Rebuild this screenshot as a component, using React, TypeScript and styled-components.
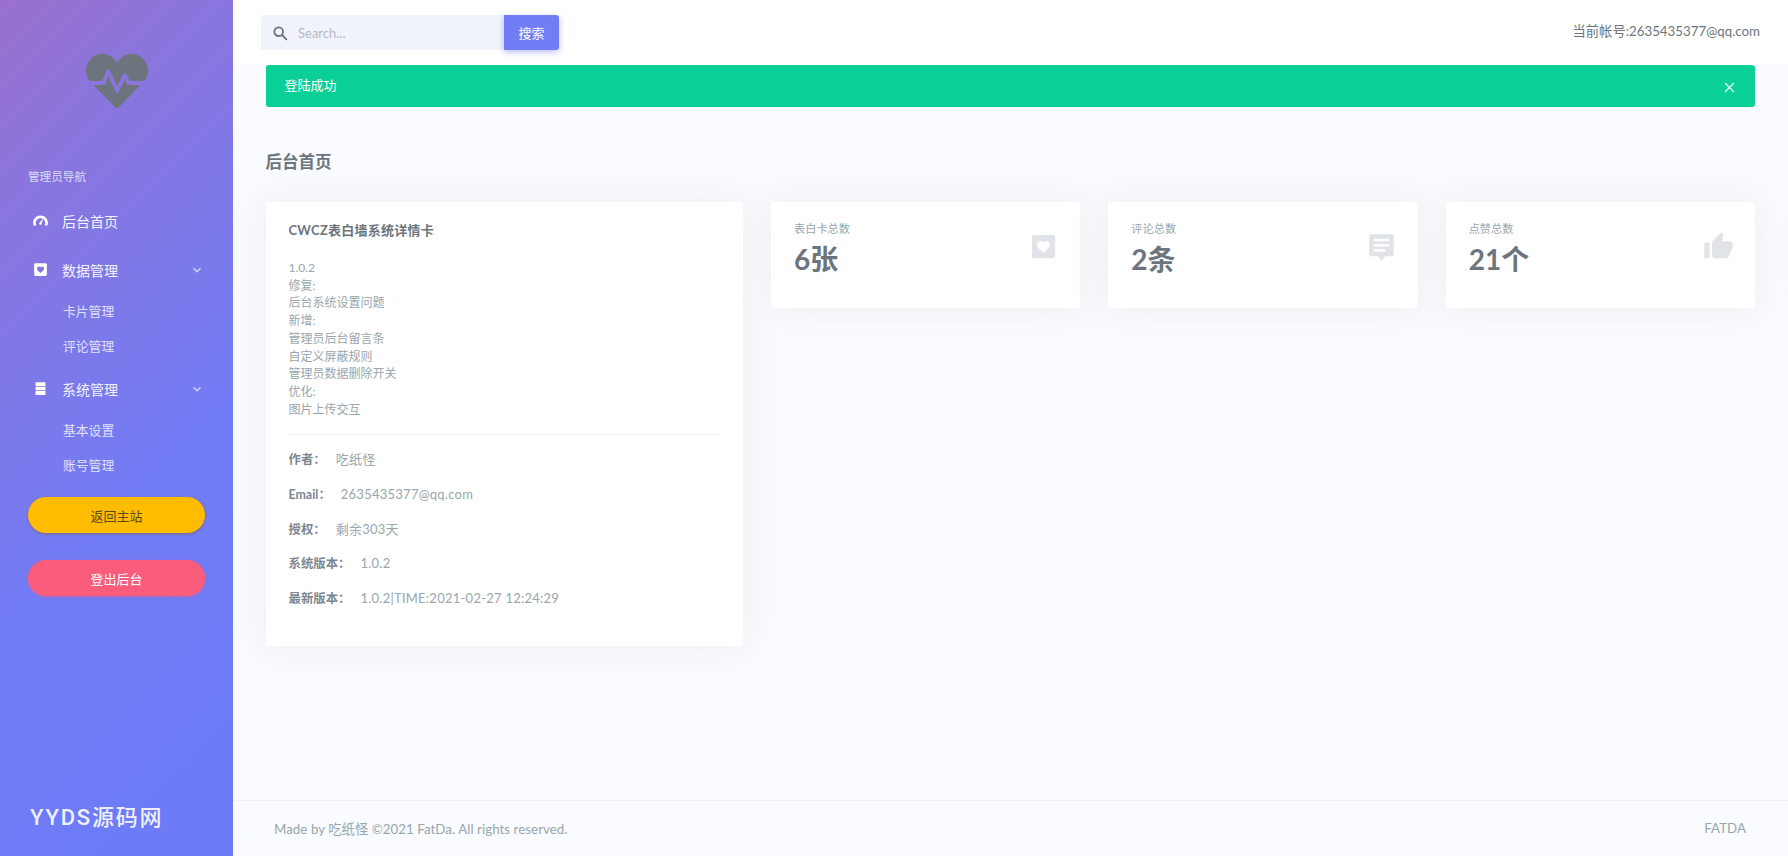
import styled, { createGlobalStyle } from "styled-components";
import { FaHeartbeat } from "react-icons/fa";
import { MdThumbUp, MdKeyboardArrowDown, MdClose } from "react-icons/md";

const GlobalStyle = createGlobalStyle`
    html, body {
        margin: 0;
        padding: 0;
        height: 100%;
    }
    body {
        font-family: Lato, "Noto Sans CJK SC", sans-serif;
        color: #6c757d;
        background: #fafbfe;
    }
`;

//layout
const Page = styled.div`
    display: flex;
    width: 100%;
    height: 856px;
    overflow: hidden;
`;

const Sidebar = styled.aside`
    width: 233px;
    flex-shrink: 0;
    display: flex;
    flex-direction: column;
    background: linear-gradient(135deg, #9a70cc 0%, #8a75dc 18%, #727cf5 58%, #6c7bf7 100%);
`;

const LogoBox = styled.div`
    height: 164px;
    padding-top: 50px;
    box-sizing: border-box;
    display: flex;
    justify-content: center;
    color: #6c757d;
    font-size: 62px;
    line-height: 1;
`;

const NavTitle = styled.div`
    height: 32px;
    line-height: 26px;
    padding-left: 28px;
    font-size: 11.6px;
    color: #dcdcf8;
`;

const NavItem = styled.div`
    height: 49px;
    display: flex;
    align-items: center;
    padding: 0 28px 0 32px;
    font-size: 14px;
    color: #f3f3fd;

    svg.lead {
        width: 17px;
        height: 17px;
        margin-right: 13px;
        fill: #fff;
    }
    svg.arrow {
        margin-left: auto;
        width: 16px;
        height: 16px;
        color: #d5d8fa;
    }
`;

const SubItem = styled.div`
    height: 35px;
    line-height: 35px;
    padding-left: 63px;
    font-size: 12.8px;
    color: #dfe1fb;
`;

const PillButton = styled.div<{ $bg: string; $color: string; $shadow: string }>`
    width: 177px;
    height: 36px;
    margin: ${(p) => (p.$bg === "#ffbc00" ? "14px" : "27px")} 0 0 28px;
    border-radius: 19px;
    display: flex;
    align-items: center;
    justify-content: center;
    font-size: 13px;
    background: ${(p) => p.$bg};
    color: ${(p) => p.$color};
    box-shadow: 0 1px 3px ${(p) => p.$shadow};
`;

const Brand = styled.div`
    margin-top: auto;
    padding: 0 0 25px 30px;
    font-family: Roboto, "Noto Sans CJK SC", sans-serif;
    font-size: 22px;
    line-height: 26px;
    letter-spacing: 1.8px;
    font-weight: 500;
    color: #eef0fe;
`;

const Main = styled.main`
    flex: 1;
    min-width: 0;
    display: flex;
    flex-direction: column;
`;

const Header = styled.header`
    height: 65px;
    flex-shrink: 0;
    box-sizing: border-box;
    padding: 15px 28px 0 28px;
    display: flex;
    justify-content: space-between;
    background: #fff;
`;

const SearchGroup = styled.div`
    display: flex;
    height: 35px;
`;

const SearchInput = styled.div`
    width: 243px;
    display: flex;
    align-items: center;
    padding-left: 11px;
    box-sizing: border-box;
    border-radius: 3px 0 0 3px;
    background: #f1f3fa;
    font-size: 13px;
    color: #b4b9c4;

    svg {
        width: 16px;
        height: 16px;
        margin-right: 10px;
        flex-shrink: 0;
    }
`;

const SearchButton = styled.div`
    width: 55px;
    display: flex;
    align-items: center;
    justify-content: center;
    border-radius: 0 3px 3px 0;
    background: #727cf5;
    color: #fff;
    font-size: 13px;
    box-shadow: 0 2px 6px 0 rgba(114, 124, 245, 0.5);
`;

const Account = styled.div`
    font-size: 13.3px;
    line-height: 17px;
    margin-top: 8px;
    color: #6c757d;
`;

const Content = styled.div`
    flex: 1;
    padding: 0 33px 0 32.5px;
`;

const Alert = styled.div`
    height: 42px;
    display: flex;
    align-items: center;
    justify-content: space-between;
    padding: 0 17px 3px 19px;
    box-sizing: border-box;
    border-radius: 3px;
    background: #0acf97;
    color: #fff;
    font-size: 13px;

    svg {
        width: 17px;
        height: 17px;
        color: #d5f7ec;
        margin: 5px 0 0;
    }
`;

const PageTitle = styled.h4`
    margin: 42px 0 27px;
    height: 26px;
    line-height: 26px;
    font-size: 16.5px;
    font-weight: 700;
    color: #6c757d;
`;

const CardGrid = styled.div`
    display: grid;
    grid-template-columns: 477.5px 1fr;
    gap: 28px;
    align-items: start;
`;

const StatRow = styled.div`
    display: grid;
    grid-template-columns: repeat(3, 1fr);
    gap: 28px;
`;

const DetailCard = styled.section`
    height: 444px;
    box-sizing: border-box;
    padding: 19px 23px;
    border-radius: 3px;
    background: #fff;
    box-shadow: 0 0 35px 0 rgba(154, 161, 171, 0.15);
`;

const DetailTitle = styled.div`
    font-size: 13px;
    font-weight: 700;
    line-height: 18px;
    letter-spacing: 0.25px;
    color: #6c757d;
`;

const Notes = styled.div`
    margin-top: 20px;
    font-size: 12px;
    line-height: 17.7px;
    color: #98a6ad;
`;

const Divider = styled.hr`
    margin: 16px 0 0;
    border: none;
    border-top: 1px solid #eef2f7;
`;

const InfoList = styled.div`
    margin-top: 7px;
`;

const InfoRow = styled.div`
    height: 34.6px;
    line-height: 34.6px;
    font-size: 13px;
    letter-spacing: 0.25px;
    color: #98a6ad;

    strong {
        color: #7d8790;
        font-size: 12.4px;
        letter-spacing: 0;
        font-weight: 700;
        margin-right: 10px;
    }
`;

const StatCard = styled.section`
    height: 106px;
    box-sizing: border-box;
    padding: 19px 23px;
    display: flex;
    justify-content: space-between;
    border-radius: 3px;
    background: #fff;
    box-shadow: 0 0 35px 0 rgba(154, 161, 171, 0.15);
`;

const StatLabel = styled.div`
    font-size: 11.2px;
    line-height: 16px;
    color: #98a6ad;
`;

const StatValue = styled.div`
    margin-top: 4px;
    font-size: 28px;
    line-height: 36px;
    font-weight: 700;
    color: #6c757d;
`;

const StatIcon = styled.div`
    width: 31px;
    height: 31px;
    margin: 10px -2px 0 0;
    color: #e0e4e8;

    svg {
        display: block;
        width: 31px;
        height: 31px;
        fill: currentColor;
    }
`;

const Footer = styled.footer`
    height: 56px;
    flex-shrink: 0;
    margin-top: auto;
    box-sizing: border-box;
    padding: 0 42px 1px 41px;
    display: flex;
    align-items: center;
    justify-content: space-between;
    border-top: 1px solid #f0f1f6;
    font-size: 13.3px;
    letter-spacing: 0.05px;
    color: #98a6ad;
`;

//icons
const GaugeIcon = () => (
    <svg className="lead" viewBox="0 0 24 24">
        <path d="M12 5C6 5 1.5 9.6 1.5 15.5c0 1.3.3 2.5.7 3.5h4.1c-.6-1-1-2.200-1-3.500C5.300 11.800 8.300 8.800 12 8.800s6.700 3 6.700 6.700c0 1.300-.4 2.500-1 3.500h4.100c.4-1 .7-2.200.7-3.500C22.500 9.600 18 5 12 5z" />
        <path d="M15.800 8.800l-4.900 6.100a1.700 1.700 0 1 0 2.500 2.100z" />
    </svg>
);

const HeartBoxPath =
    "M5,3H19A2,2 0 0,1 21,5V19A2,2 0 0,1 19,21H5A2,2 0 0,1 3,19V5A2,2 0 0,1 5,3M12,17L12.72,16.34C15.3,14 17,12.46 17,10.57C17,9.03 15.79,7.82 14.25,7.82C13.38,7.82 12.55,8.23 12,8.87C11.45,8.23 10.62,7.82 9.75,7.82C8.21,7.82 7,9.03 7,10.57C7,12.46 8.7,14 11.28,16.34L12,17Z";

const HeartBoxIcon = ({ className }: { className?: string }) => (
    <svg className={className} viewBox="0 0 24 24">
        <path d={HeartBoxPath} fillRule="evenodd" />
    </svg>
);

const ServerIcon = () => (
    <svg className="lead" viewBox="0 0 24 24">
        <path d="M5 3h14v5.500H5zM5 9.500h14v5H5zM5 15.500h14V21H5z" />
    </svg>
);

const CommentIcon = () => (
    <svg viewBox="0 0 24 24">
        <path
            fillRule="evenodd"
            d="M4 2.500h16a1.500 1.500 0 0 1 1.500 1.500v14a1.500 1.500 0 0 1-1.500 1.500h-5L12 23l-3-3.500H4A1.500 1.500 0 0 1 2.500 18V4A1.500 1.500 0 0 1 4 2.500zM6 6v2h12V6zM6 10v2h12v-2zM6 14v2h9v-2z"
        />
    </svg>
);

const SearchIcon = () => (
    <svg viewBox="0 0 24 24" fill="none" stroke="#6c757d" strokeWidth="2.800">
        <circle cx="10" cy="10" r="6.500" />
        <path d="M15 15l6.500 6.500" strokeLinecap="round" />
    </svg>
);

const notes = [
    "1.0.2",
    "修复:",
    "后台系统设置问题",
    "新增:",
    "管理员后台留言条",
    "自定义屏蔽规则",
    "管理员数据删除开关",
    "优化:",
    "图片上传交互",
];

const info = [
    { label: "作者：", value: "吃纸怪" },
    { label: "Email：", value: "2635435377@qq.com" },
    { label: "授权：", value: "剩余303天" },
    { label: "系统版本：", value: "1.0.2" },
    { label: "最新版本：", value: "1.0.2|TIME:2021-02-27 12:24:29" },
];

const App = () => {
    return (
        <Page>
            <GlobalStyle />
            <Sidebar>
                <LogoBox>
                    <FaHeartbeat />
                </LogoBox>
                <NavTitle>管理员导航</NavTitle>
                <NavItem>
                    <GaugeIcon />
                    后台首页
                </NavItem>
                <NavItem>
                    <HeartBoxIcon className="lead" />
                    数据管理
                    <MdKeyboardArrowDown className="arrow" />
                </NavItem>
                <SubItem>卡片管理</SubItem>
                <SubItem>评论管理</SubItem>
                <NavItem>
                    <ServerIcon />
                    系统管理
                    <MdKeyboardArrowDown className="arrow" />
                </NavItem>
                <SubItem>基本设置</SubItem>
                <SubItem>账号管理</SubItem>
                <PillButton $bg="#ffbc00" $color="#5b4a10" $shadow="rgba(120, 100, 90, 0.8)">
                    返回主站
                </PillButton>
                <PillButton $bg="#fa5c7c" $color="#fff" $shadow="rgba(250, 92, 124, 0.5)">
                    登出后台
                </PillButton>
                <Brand>YYDS源码网</Brand>
            </Sidebar>
            <Main>
                <Header>
                    <SearchGroup>
                        <SearchInput>
                            <SearchIcon />
                            Search...
                        </SearchInput>
                        <SearchButton>搜索</SearchButton>
                    </SearchGroup>
                    <Account>当前帐号:2635435377@qq.com</Account>
                </Header>
                <Content>
                    <Alert>
                        登陆成功
                        <MdClose />
                    </Alert>
                    <PageTitle>后台首页</PageTitle>
                    <CardGrid>
                        <DetailCard>
                            <DetailTitle>CWCZ表白墙系统详情卡</DetailTitle>
                            <Notes>
                                {notes.map((line, index) => (
                                    <div key={index}>{line}</div>
                                ))}
                            </Notes>
                            <Divider />
                            <InfoList>
                                {info.map((row) => (
                                    <InfoRow key={row.label}>
                                        <strong>{row.label}</strong>
                                        {row.value}
                                    </InfoRow>
                                ))}
                            </InfoList>
                        </DetailCard>
                        <StatRow>
                            <StatCard>
                                <div>
                                    <StatLabel>表白卡总数</StatLabel>
                                    <StatValue>6张</StatValue>
                                </div>
                                <StatIcon>
                                    <HeartBoxIcon />
                                </StatIcon>
                            </StatCard>
                            <StatCard>
                                <div>
                                    <StatLabel>评论总数</StatLabel>
                                    <StatValue>2条</StatValue>
                                </div>
                                <StatIcon>
                                    <CommentIcon />
                                </StatIcon>
                            </StatCard>
                            <StatCard>
                                <div>
                                    <StatLabel>点赞总数</StatLabel>
                                    <StatValue>21个</StatValue>
                                </div>
                                <StatIcon>
                                    <MdThumbUp />
                                </StatIcon>
                            </StatCard>
                        </StatRow>
                    </CardGrid>
                </Content>
                <Footer>
                    <span>Made by 吃纸怪 ©2021 FatDa. All rights reserved.</span>
                    <span>FATDA</span>
                </Footer>
            </Main>
        </Page>
    );
};

export default App;
